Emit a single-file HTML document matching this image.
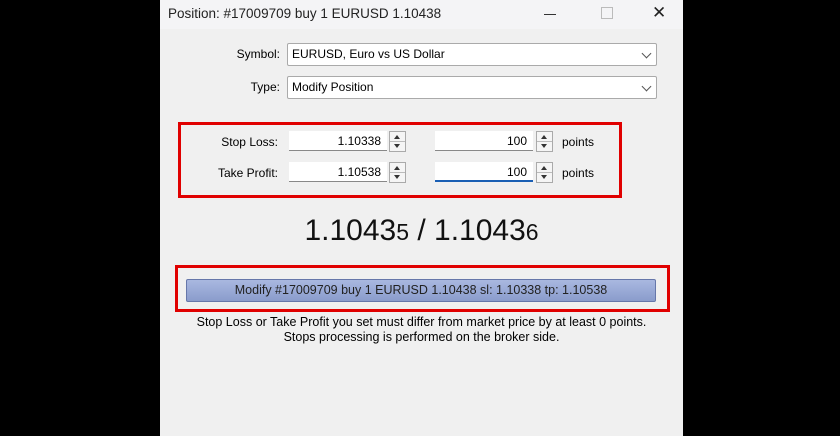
<!DOCTYPE html>
<html><head><style>
body{margin:0;width:840px;height:436px;background:#000;position:relative;overflow:hidden;font-family:"Liberation Sans",sans-serif;font-size:12px;color:#000}
.d{position:absolute;left:160px;top:0;width:523px;height:436px;background:#f0f0f0}
.t{position:absolute;left:0;top:0;width:523px;height:29px;background:#f4f4f6}
.a{position:absolute}
.in{position:absolute;background:#fff;border-bottom:1px solid #888;height:20px;line-height:20px;text-align:right;box-sizing:border-box;padding-right:6px;font-size:12px}
.sel{position:absolute;background:#fff;border:1px solid #aaa;border-radius:2px;height:23px;line-height:21px;box-sizing:border-box;padding-left:4px}
.sp{position:absolute;width:17px;height:21px;border:1px solid #aaa;background:#f5f5f5;box-sizing:border-box}
.sp:before{content:"";position:absolute;left:4px;top:3px;border:3.5px solid transparent;border-bottom:4px solid #333;border-top:0}
.sp:after{content:"";position:absolute;left:4px;top:12px;border:3.5px solid transparent;border-top:4px solid #333;border-bottom:0}
.sp i{position:absolute;left:0;right:0;top:9px;border-top:1px solid #bbb}
.red{position:absolute;border:3px solid #e00000;box-sizing:border-box}
.chev{position:absolute;right:6px;top:6px;width:6px;height:6px;border-right:1px solid #555;border-bottom:1px solid #555;transform:rotate(45deg)}
</style></head><body>
<div class="d">
<div class="t"></div>
<div class="a" style="left:8px;top:6px;font-size:13.5px;color:#222">Position: #17009709 buy 1 EURUSD 1.10438</div>
<div class="a" style="left:384px;top:14px;width:12px;border-top:1px solid #333"></div>
<div class="a" style="left:441px;top:7px;width:10px;height:10px;border:1px solid #bbb"></div>
<div class="a" style="left:492px;top:3px;font-size:17px;color:#222">✕</div>

<div class="a" style="left:60px;top:47px;width:60px;text-align:right">Symbol:</div>
<div class="sel" style="left:127px;top:43px;width:370px">EURUSD, Euro vs US Dollar<span class="chev"></span></div>
<div class="a" style="left:60px;top:80px;width:60px;text-align:right">Type:</div>
<div class="sel" style="left:127px;top:76px;width:370px">Modify Position<span class="chev"></span></div>

<div class="a" style="left:40px;top:135px;width:78px;text-align:right">Stop Loss:</div>
<div class="in" style="left:129px;top:131px;width:98px">1.10338</div>
<div class="sp" style="left:229px;top:131px"><i></i></div>
<div class="in" style="left:275px;top:131px;width:98px">100</div>
<div class="sp" style="left:376px;top:131px"><i></i></div>
<div class="a" style="left:402px;top:135px">points</div>

<div class="a" style="left:40px;top:166px;width:78px;text-align:right">Take Profit:</div>
<div class="in" style="left:129px;top:162px;width:98px">1.10538</div>
<div class="sp" style="left:229px;top:162px"><i></i></div>
<div class="in" style="left:275px;top:162px;width:98px;border-bottom:2px solid #1a5fb4">100</div>
<div class="sp" style="left:376px;top:162px"><i></i></div>
<div class="a" style="left:402px;top:166px">points</div>

<div class="a" style="left:0;width:523px;top:214px;text-align:center;font-size:30px;color:#111">1.1043<span style="font-size:23px">5</span> / 1.1043<span style="font-size:23px">6</span></div>

<div class="a" style="left:26px;top:279px;width:470px;height:23px;border:1px solid #6677aa;border-radius:2px;box-sizing:border-box;background:linear-gradient(#a9b8e0,#8a9ccc);text-align:center;line-height:21px;color:#222;font-size:12.5px">Modify #17009709 buy 1 EURUSD 1.10438 sl: 1.10338 tp: 1.10538</div>
<div class="a" style="left:0;width:523px;top:315px;text-align:center;line-height:15px;font-size:12.5px">Stop Loss or Take Profit you set must differ from market price by at least 0 points.<br>Stops processing is performed on the broker side.</div>
</div>
<div class="red" style="left:178px;top:122px;width:444px;height:76px"></div>
<div class="red" style="left:175px;top:265px;width:495px;height:47px"></div>
</body></html>
